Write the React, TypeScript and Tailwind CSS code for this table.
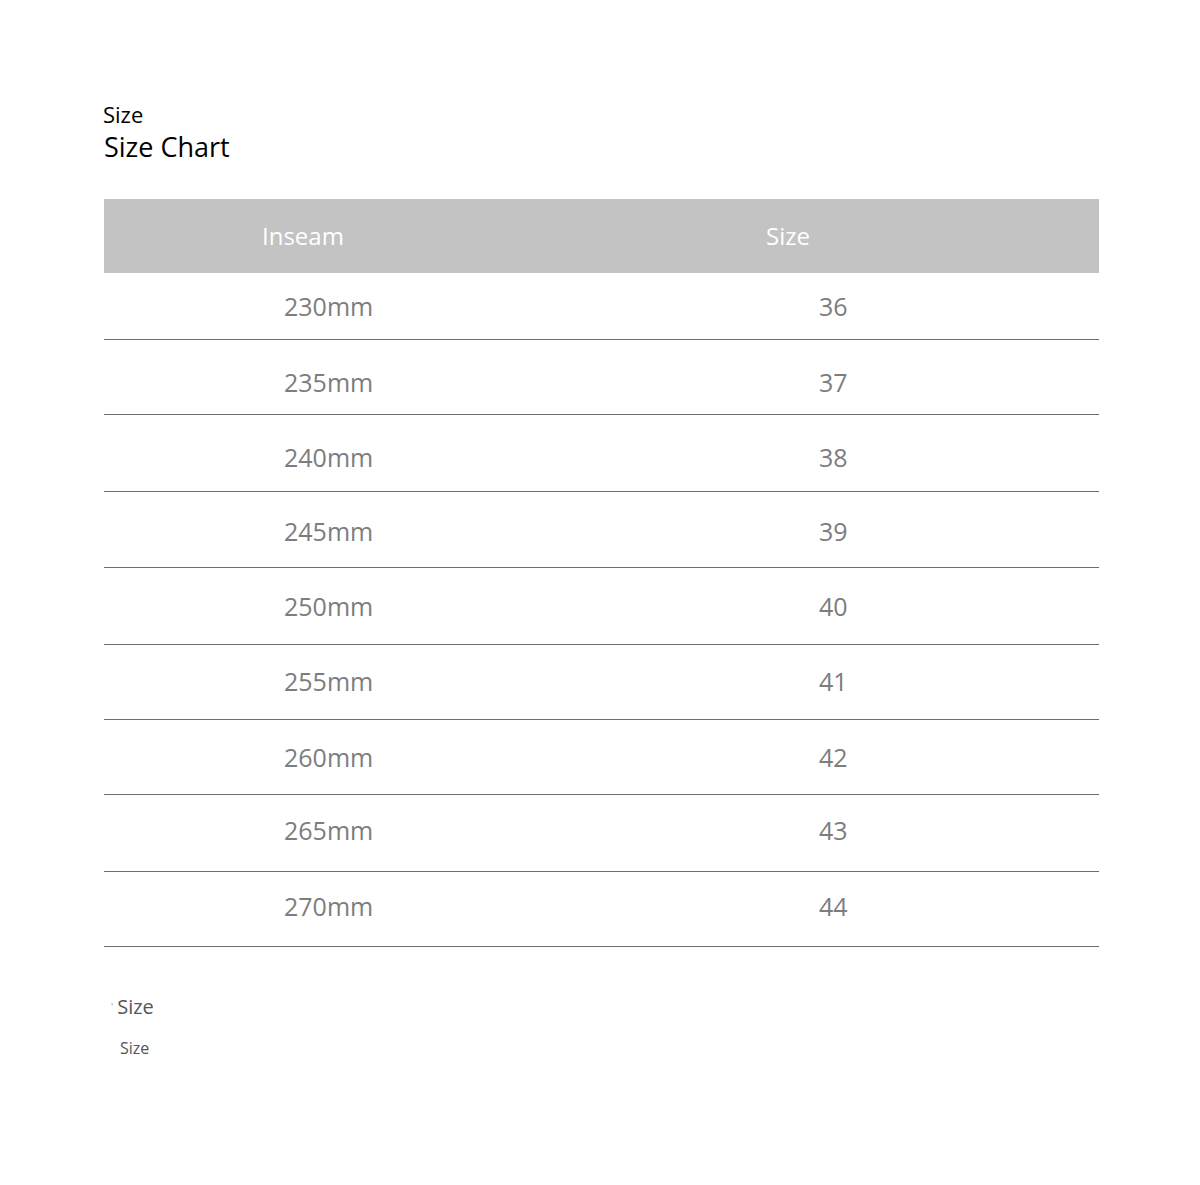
const rows = [
  { inseam: "230mm", size: "36", cls: "h-[67px] pt-[2px]" },
  { inseam: "235mm", size: "37", cls: "h-[75px] pt-[12px]" },
  { inseam: "240mm", size: "38", cls: "h-[77px] pt-[10px]" },
  { inseam: "245mm", size: "39", cls: "h-[76px] pt-[4px]" },
  { inseam: "250mm", size: "40", cls: "h-[77px] pt-[2px]" },
  { inseam: "255mm", size: "41", cls: "h-[75px]" },
  { inseam: "260mm", size: "42", cls: "h-[75px] pt-[2px]" },
  { inseam: "265mm", size: "43", cls: "h-[77px] pb-[4px]" },
  { inseam: "270mm", size: "44", cls: "h-[75px] pb-[4px]" },
];

export default function App() {
  return (
    <div className="w-[1200px] h-[1185px] bg-white font-['Open_Sans',sans-serif] pt-[100px] pl-[104px]">
      {/* 제목 */}
      <div className="text-[22px] leading-[28px] text-black -ml-[1px]">Size</div>
      <div className="text-[27px] leading-[38px] text-black">Size Chart</div>

      {/* 사이즈 표 */}
      <div className="w-[995px] mt-[33px]">
        <div className="grid grid-cols-[480px_1fr] h-[74px] bg-[#c3c3c3] items-center text-white text-[24px]">
          <div className="pl-[158px] -mt-[1px]">Inseam</div>
          <div className="pl-[182px]">Size</div>
        </div>
        {rows.map((row) => (
          <div
            key={row.inseam}
            className={`grid grid-cols-[480px_1fr] items-center border-b border-[#6e6e6e] text-[#7d7d7d] text-[25px] ${row.cls}`}
          >
            <div className="pl-[180px]">{row.inseam}</div>
            <div className="pl-[235px]">{row.size}</div>
          </div>
        ))}
      </div>

      {/* 하단 설명 */}
      <div className="mt-[46px] pl-[7px] text-[20px] leading-[28px] text-[#555555]">
        <span className="text-[10px] align-top text-[#999999]">'</span>
        <span className="pl-[4px]">Size</span>
      </div>
      <div className="mt-[17px] pl-[16px] text-[16px] leading-[20px] text-[#555555]">Size</div>
    </div>
  );
}
